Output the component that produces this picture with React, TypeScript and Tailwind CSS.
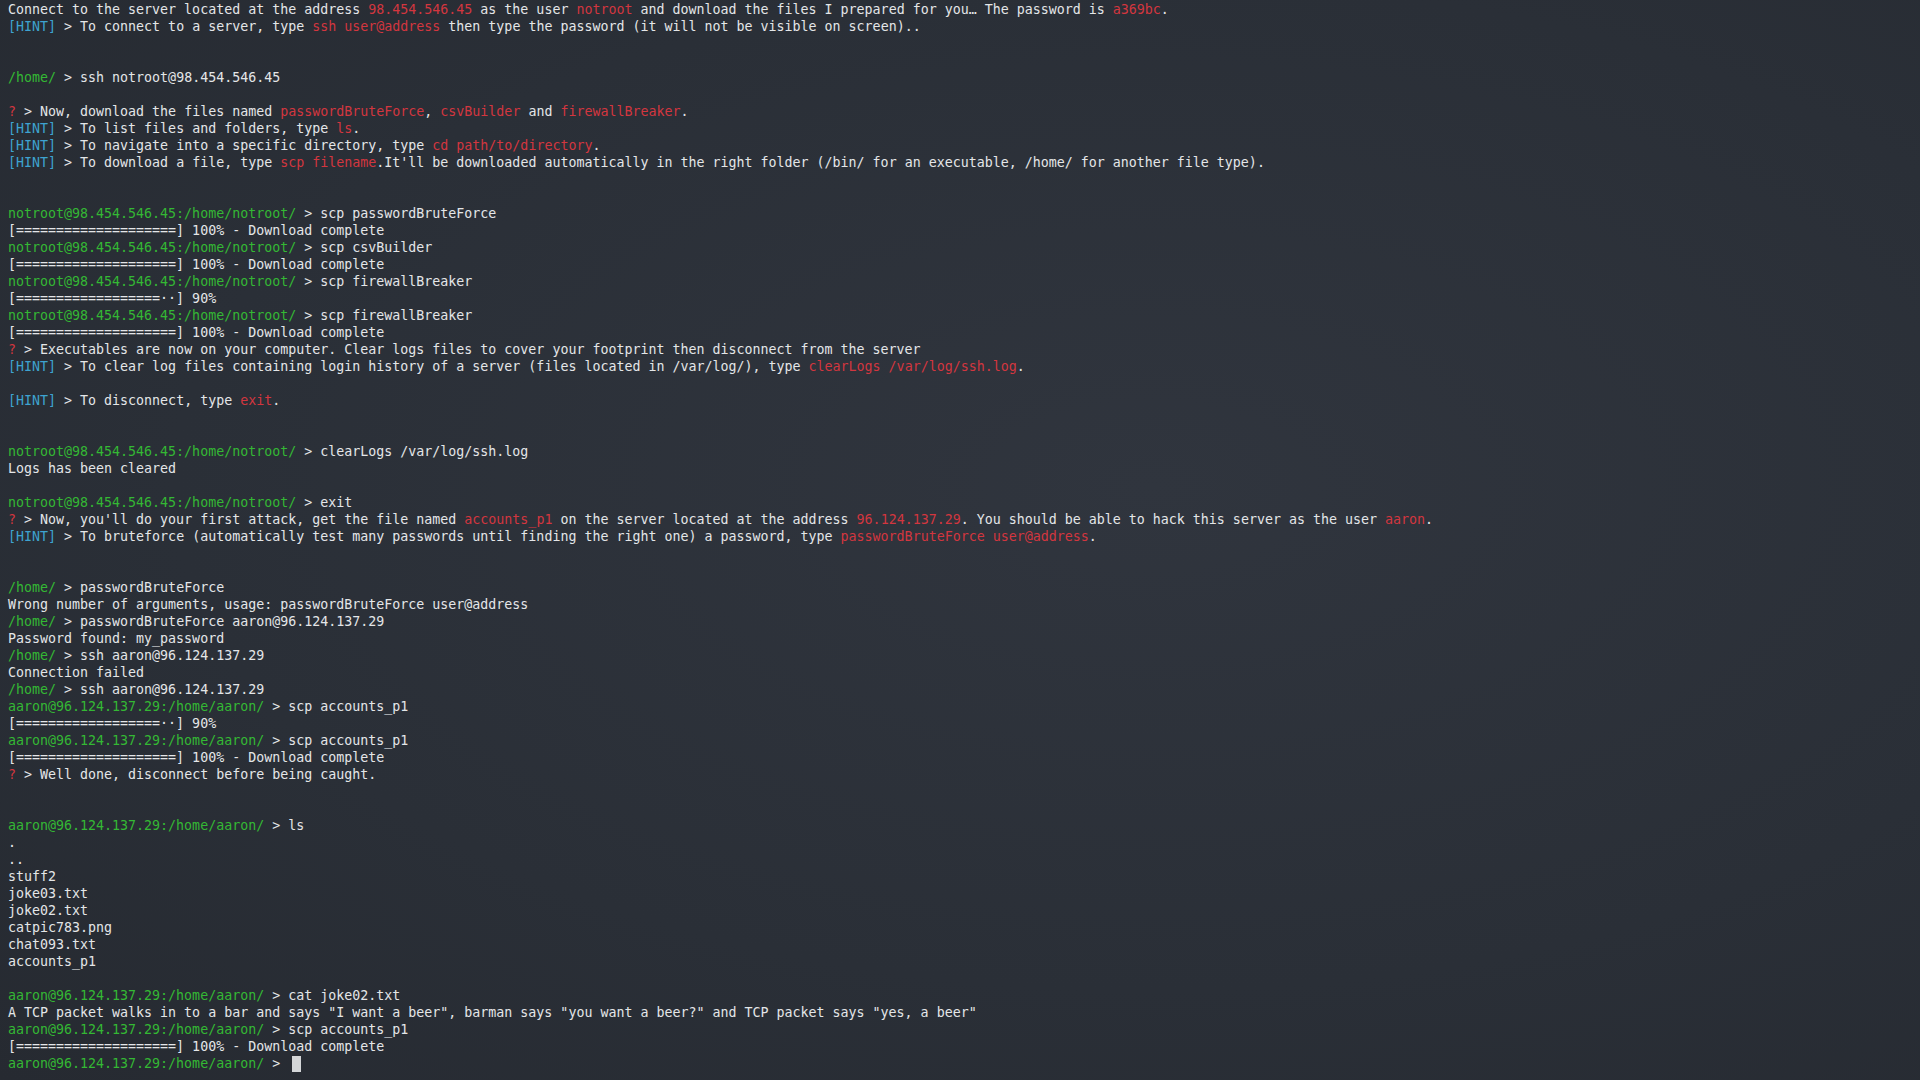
import React from "react";

type Seg = [string, string];
const W = "w";
const G = "g";
const R = "r";
const C = "c";

const cls: Record<string, string> = {
  w: "text-[#e4e6e8]",
  g: "text-[#34b834]",
  r: "text-[#d3363f]",
  c: "text-[#3ea3d0]",
};

const NP = "notroot@98.454.546.45:/home/notroot/";
const AP = "aaron@96.124.137.29:/home/aaron/";
const FULL = "[====================] 100% - Download complete";
const NINETY = "[==================··] 90%";

const lines: (Seg[] | null | "cursor")[] = [
  [[W, "Connect to the server located at the address "], [R, "98.454.546.45"], [W, " as the user "], [R, "notroot"], [W, " and download the files I prepared for you… The password is "], [R, "a369bc"], [W, "."]],
  [[C, "[HINT]"], [W, " > To connect to a server, type "], [R, "ssh user@address"], [W, " then type the password (it will not be visible on screen).."]],
  null,
  null,
  [[G, "/home/"], [W, " > ssh notroot@98.454.546.45"]],
  null,
  [[R, "?"], [W, " > Now, download the files named "], [R, "passwordBruteForce"], [W, ", "], [R, "csvBuilder"], [W, " and "], [R, "firewallBreaker"], [W, "."]],
  [[C, "[HINT]"], [W, " > To list files and folders, type "], [R, "ls"], [W, "."]],
  [[C, "[HINT]"], [W, " > To navigate into a specific directory, type "], [R, "cd path/to/directory"], [W, "."]],
  [[C, "[HINT]"], [W, " > To download a file, type "], [R, "scp filename"], [W, ".It'll be downloaded automatically in the right folder (/bin/ for an executable, /home/ for another file type)."]],
  null,
  null,
  [[G, NP], [W, " > scp passwordBruteForce"]],
  [[W, FULL]],
  [[G, NP], [W, " > scp csvBuilder"]],
  [[W, FULL]],
  [[G, NP], [W, " > scp firewallBreaker"]],
  [[W, NINETY]],
  [[G, NP], [W, " > scp firewallBreaker"]],
  [[W, FULL]],
  [[R, "?"], [W, " > Executables are now on your computer. Clear logs files to cover your footprint then disconnect from the server"]],
  [[C, "[HINT]"], [W, " > To clear log files containing login history of a server (files located in /var/log/), type "], [R, "clearLogs /var/log/ssh.log"], [W, "."]],
  null,
  [[C, "[HINT]"], [W, " > To disconnect, type "], [R, "exit"], [W, "."]],
  null,
  null,
  [[G, NP], [W, " > clearLogs /var/log/ssh.log"]],
  [[W, "Logs has been cleared"]],
  null,
  [[G, NP], [W, " > exit"]],
  [[R, "?"], [W, " > Now, you'll do your first attack, get the file named "], [R, "accounts_p1"], [W, " on the server located at the address "], [R, "96.124.137.29"], [W, ". You should be able to hack this server as the user "], [R, "aaron"], [W, "."]],
  [[C, "[HINT]"], [W, " > To bruteforce (automatically test many passwords until finding the right one) a password, type "], [R, "passwordBruteForce user@address"], [W, "."]],
  null,
  null,
  [[G, "/home/"], [W, " > passwordBruteForce"]],
  [[W, "Wrong number of arguments, usage: passwordBruteForce user@address"]],
  [[G, "/home/"], [W, " > passwordBruteForce aaron@96.124.137.29"]],
  [[W, "Password found: my_password"]],
  [[G, "/home/"], [W, " > ssh aaron@96.124.137.29"]],
  [[W, "Connection failed"]],
  [[G, "/home/"], [W, " > ssh aaron@96.124.137.29"]],
  [[G, AP], [W, " > scp accounts_p1"]],
  [[W, NINETY]],
  [[G, AP], [W, " > scp accounts_p1"]],
  [[W, FULL]],
  [[R, "?"], [W, " > Well done, disconnect before being caught."]],
  null,
  null,
  [[G, AP], [W, " > ls"]],
  [[W, "."]],
  [[W, ".."]],
  [[W, "stuff2"]],
  [[W, "joke03.txt"]],
  [[W, "joke02.txt"]],
  [[W, "catpic783.png"]],
  [[W, "chat093.txt"]],
  [[W, "accounts_p1"]],
  null,
  [[G, AP], [W, " > cat joke02.txt"]],
  [[W, 'A TCP packet walks in to a bar and says "I want a beer", barman says "you want a beer?" and TCP packet says "yes, a beer"']],
  [[G, AP], [W, " > scp accounts_p1"]],
  [[W, FULL]],
  "cursor",
];

export default function App() {
  return (
    <div className="h-screen w-full overflow-hidden bg-[radial-gradient(ellipse_at_60%_45%,#30353e_0%,#2a2f37_60%,#262a31_100%)] pl-[8px] pt-[1px] font-['DejaVu_Sans_Mono',monospace] text-[13.3px] leading-[17px] text-[#e4e6e8]">
      {lines.map((line, i) => {
        if (line === null) {
          return <div key={i} className="h-[17px]" />;
        }
        if (line === "cursor") {
          return (
            <div key={i} className="flex h-[17px] items-center whitespace-pre">
              <span className={cls.g}>{AP}</span>
              <span>{" > "}</span>
              <span className="ml-[4px] inline-block h-[16px] w-[9px] bg-[#d4d6d8]" />
            </div>
          );
        }
        return (
          <div key={i} className="h-[17px] whitespace-pre">
            {line.map(([c, t], j) => (
              <span key={j} className={cls[c]}>
                {t}
              </span>
            ))}
          </div>
        );
      })}
    </div>
  );
}
